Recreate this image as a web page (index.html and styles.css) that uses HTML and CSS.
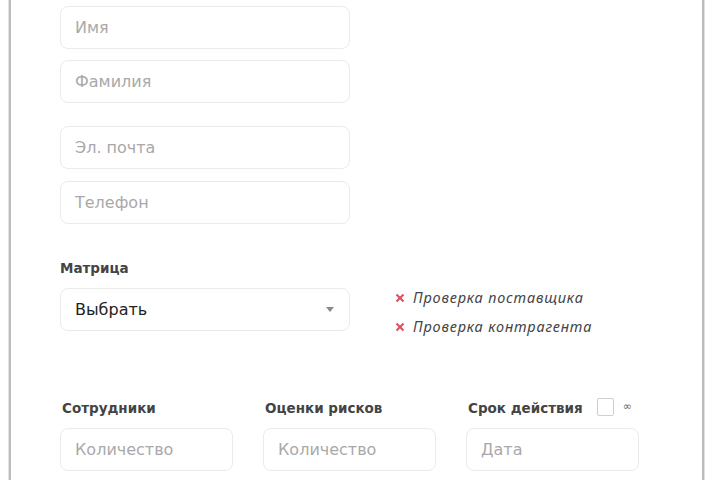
FILE: index.html
```html
<!DOCTYPE html>
<html lang="ru">
  <head>
    <meta charset="UTF-8" />
    <meta name="viewport" content="width=device-width, initial-scale=1.0" />
    <title>Анкета</title>
    <link rel="stylesheet" href="styles.css">
  </head>
  <body>
    <div class="card">
      <div class="stack">
        <input class="field" type="text" placeholder="Имя" />
        <input class="field" type="text" placeholder="Фамилия" />
      </div>

      <div class="stack contacts">
        <input class="field" type="text" placeholder="Эл. почта" />
        <input class="field" type="text" placeholder="Телефон" />
      </div>

      <div class="label matrix-label">Матрица</div>
      <div class="matrix-row">
        <div class="select">
          <span>Выбрать</span>
          <span class="arrow"></span>
        </div>
        <div class="checks">
          <div class="check">
            <svg class="cross" viewBox="0 0 10 10"><path d="M1.5 1.5 L8.5 8.5 M8.5 1.5 L1.5 8.5" /></svg>
            <span>Проверка поставщика</span>
          </div>
          <div class="check">
            <svg class="cross" viewBox="0 0 10 10"><path d="M1.5 1.5 L8.5 8.5 M8.5 1.5 L1.5 8.5" /></svg>
            <span>Проверка контрагента</span>
          </div>
        </div>
      </div>

      <div class="columns">
        <div class="col">
          <div class="col-head"><span class="label">Сотрудники</span></div>
          <input class="field small" type="text" placeholder="Количество" />
        </div>
        <div class="col">
          <div class="col-head"><span class="label">Оценки рисков</span></div>
          <input class="field small" type="text" placeholder="Количество" />
        </div>
        <div class="col">
          <div class="col-head">
            <span class="label">Срок действия</span>
            <span class="box"></span>
            <span class="inf">∞</span>
          </div>
          <input class="field small" type="text" placeholder="Дата" />
        </div>
      </div>
    </div>
  </body>
</html>
```

FILE: styles.css
```css
body {
  margin: 0;
  background: #fff;
  font-family: "DejaVu Sans", sans-serif;
  color: #333;
}
.card {
  margin-left: 9px;
  width: 695px;
  height: 480px;
  box-sizing: border-box;
  padding: 6px 0 0 49px;
  border-left: 2px solid #bcbcbc;
  border-right: 2px solid #bcbcbc;
  box-shadow: 1px 0 0 #e2e2e2, -1px 0 0 #e2e2e2;
}
.stack {
  display: flex;
  flex-direction: column;
  gap: 11px;
}
.contacts {
  margin-top: 23px;
  gap: 12px;
}
.field {
  width: 290px;
  height: 43px;
  box-sizing: border-box;
  border: 1px solid #ebebeb;
  border-radius: 8px;
  padding: 0 14px;
  font-family: "DejaVu Sans", sans-serif;
  font-size: 16px;
  color: #333;
  outline: none;
  background: #fff;
}
.field::placeholder {
  color: #a9a9a9;
}
.field.small {
  width: 173px;
}
.label {
  font-size: 13.5px;
  font-weight: bold;
  color: #444;
  line-height: 16px;
}
.matrix-label {
  margin-top: 36px;
}
.matrix-row {
  display: flex;
  margin-top: 12px;
}
.select {
  width: 290px;
  height: 43px;
  box-sizing: border-box;
  border: 1px solid #ebebeb;
  border-radius: 8px;
  padding: 0 14px;
  display: flex;
  align-items: center;
  justify-content: space-between;
  font-size: 16px;
  color: #222;
}
.arrow {
  width: 0;
  height: 0;
  border-left: 4px solid transparent;
  border-right: 4px solid transparent;
  border-top: 5px solid #8a8a8a;
  margin-right: 1px;
}
.checks {
  margin-left: 45px;
  display: flex;
  flex-direction: column;
  gap: 12px;
  padding-top: 1px;
}
.check {
  display: flex;
  align-items: center;
  gap: 8px;
  font-family: "Noto Sans", "DejaVu Sans", sans-serif;
  font-style: italic;
  font-size: 14.5px;
  letter-spacing: 0.8px;
  color: #444;
  line-height: 17px;
}
.cross {
  width: 10px;
  height: 10px;
}
.cross path {
  stroke: #e24a60;
  stroke-width: 2;
  fill: none;
}
.columns {
  display: flex;
  gap: 30px;
  margin-top: 64px;
}
.col-head {
  display: flex;
  align-items: center;
  height: 18px;
  margin-bottom: 11px;
  padding-left: 2px;
}
.box {
  width: 15px;
  height: 16px;
  border: 1px solid #cfcfcf;
  border-radius: 2px;
  margin-left: 14px;
  margin-top: -2px;
}
.inf {
  font-size: 11px;
  color: #666;
  margin-left: 9px;
  margin-top: -3px;
}
```
